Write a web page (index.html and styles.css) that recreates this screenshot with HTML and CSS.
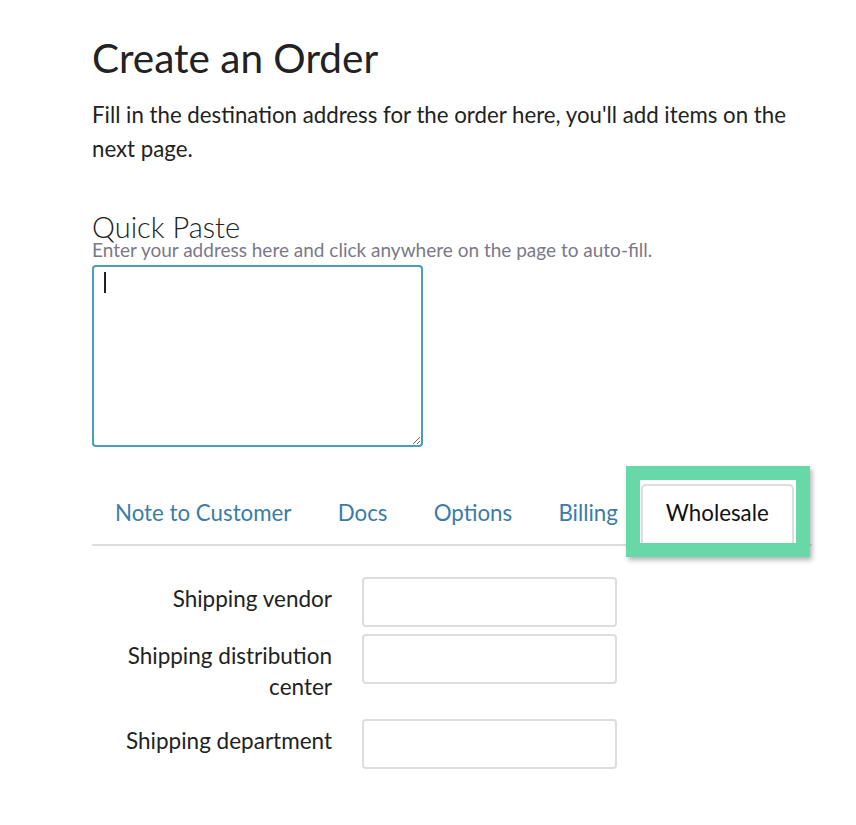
FILE: index.html
```html
<!DOCTYPE html>
<html lang="en">
<head>
<meta charset="utf-8">
<title>Create an Order</title>
<link rel="stylesheet" href="styles.css">
</head>
<body>
<main class="page">
  <h1 class="title">Create an Order</h1>
  <p class="intro">Fill in the destination address for the order here, you'll add items on the next page.</p>

  <section class="quick-paste">
    <h2 class="qp-title">Quick Paste</h2>
    <p class="qp-help">Enter your address here and click anywhere on the page to auto-fill.</p>
    <div class="qp-box">
      <textarea class="qp-input"></textarea>
      <span class="caret"></span>
    </div>
  </section>

  <ul class="tabs">
    <li class="tab tab-first">Note to Customer</li>
    <li class="tab">Docs</li>
    <li class="tab">Options</li>
    <li class="tab">Billing</li>
    <li class="tab tab-active">Wholesale<span class="highlight"></span></li>
  </ul>

  <form class="form">
    <label class="form-label">Shipping vendor</label>
    <input class="form-input" type="text">
    <label class="form-label">Shipping distribution center</label>
    <input class="form-input" type="text">
    <label class="form-label">Shipping department</label>
    <input class="form-input" type="text">
  </form>
</main>
</body>
</html>
```

FILE: styles.css
```css
html, body {
  margin: 0;
  padding: 0;
  background: #ffffff;
}

body {
  font-family: Lato, "Open Sans", sans-serif;
  color: #222222;
}

.page {
  padding-left: 92px;
  width: 720px;
}

.title {
  font-size: 40.5px;
  font-weight: 400;
  line-height: 48px;
  margin: 34px 0 0 0;
  color: #222222;
}

.intro {
  font-size: 22.25px;
  line-height: 34px;
  margin: 16px 0 0 0;
  color: #222222;
}

.quick-paste {
  margin-top: 48px;
}

.qp-title {
  font-size: 29px;
  font-weight: 300;
  line-height: 26px;
  margin: 0;
  color: #222222;
}

.qp-help {
  font-size: 19px;
  line-height: 20px;
  margin: 0;
  color: #7a7988;
}

.qp-box {
  position: relative;
  margin-top: 5px;
  width: 331px;
  height: 182px;
}

.qp-input {
  box-sizing: border-box;
  width: 331px;
  height: 182px;
  margin: 0;
  border: 2px solid #4d9bbf;
  border-radius: 4px;
  outline: none;
  display: block;
  font-family: Lato, sans-serif;
  font-size: 18px;
  padding: 6px 10px;
}

.caret {
  position: absolute;
  left: 12px;
  top: 7px;
  width: 2px;
  height: 21px;
  background: #222222;
}

.tabs {
  list-style: none;
  margin: 37px 0 0 0;
  padding: 0;
  display: flex;
  border-bottom: 2px solid #dddddd;
}

.tab {
  flex-shrink: 0;
  white-space: nowrap;
  font-size: 22.3px;
  line-height: 30px;
  padding: 14px 23px 16px 23.25px;
  color: #3b7ca8;
  position: relative;
}

.tab-first {
  padding-left: 23px;
}

.tab-active {
  color: #111111;
  border: 2px solid #dddddd;
  border-bottom: none;
  border-radius: 5px 5px 0 0;
  padding: 12px 23px 16px 23px;
  background: #ffffff;
  margin-bottom: -2px;
}

.highlight {
  position: absolute;
  left: -17px;
  top: -20px;
  width: 184px;
  height: 91px;
  box-sizing: border-box;
  border: 14px solid #67d9a9;
  box-shadow: 2px 3px 5px rgba(0, 0, 0, 0.3);
  pointer-events: none;
}

.form {
  margin-top: 31px;
  display: grid;
  grid-template-columns: 240px 255px;
  column-gap: 30px;
  row-gap: 7px;
  align-items: start;
}

.form-label {
  font-size: 22.5px;
  line-height: 31px;
  padding: 6px 0 10px 0;
  text-align: right;
  color: #222222;
}

.form-input {
  box-sizing: border-box;
  width: 255px;
  height: 50px;
  margin: 0;
  border: 2px solid #dddddd;
  border-radius: 4px;
  outline: none;
  font-family: Lato, sans-serif;
  font-size: 18px;
  padding: 0 10px;
}
```
